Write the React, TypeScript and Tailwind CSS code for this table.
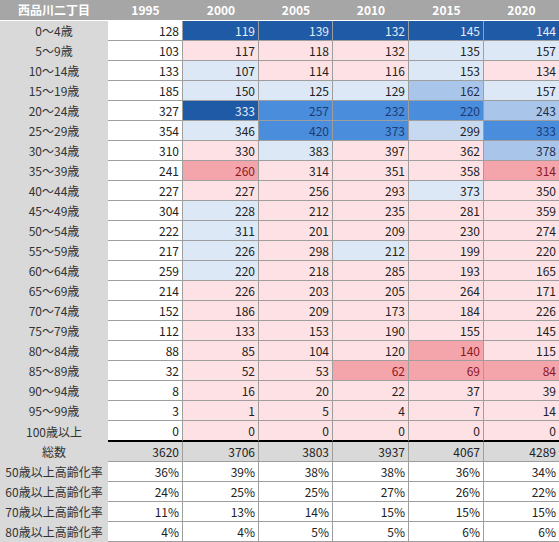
import React from 'react'

type Tone = 'w' | 'D' | 'M' | 'S' | 'T' | 'L' | 'P' | 'R'

const YEARS = ['1995', '2000', '2005', '2010', '2015', '2020']

// each row: label, then values with their fill tone (1995 is always plain)
const AGE_ROWS: [string, string][] = [
  ['0～4歳', '128w 119D 139D 132D 145D 144D'],
  ['5～9歳', '103w 117P 118P 132P 135L 157L'],
  ['10～14歳', '133w 107L 114P 116P 153L 134P'],
  ['15～19歳', '185w 150L 125L 129L 162S 157L'],
  ['20～24歳', '327w 333D 257M 232M 220M 243S'],
  ['25～29歳', '354w 346L 420M 373M 299T 333M'],
  ['30～34歳', '310w 330P 383L 397P 362P 378S'],
  ['35～39歳', '241w 260R 314P 351P 358P 314R'],
  ['40～44歳', '227w 227P 256P 293P 373L 350P'],
  ['45～49歳', '304w 228L 212P 235P 281P 359P'],
  ['50～54歳', '222w 311L 201P 209P 230P 274P'],
  ['55～59歳', '217w 226L 298P 212L 199P 220P'],
  ['60～64歳', '259w 220L 218P 285P 193P 165P'],
  ['65～69歳', '214w 226P 203P 205P 264P 171P'],
  ['70～74歳', '152w 186P 209P 173P 184P 226P'],
  ['75～79歳', '112w 133P 153P 190P 155P 145P'],
  ['80～84歳', '88w 85P 104P 120P 140R 115P'],
  ['85～89歳', '32w 52P 53P 62R 69R 84R'],
  ['90～94歳', '8w 16P 20P 22P 37P 39P'],
  ['95～99歳', '3w 1P 5P 4P 7P 14P'],
  ['100歳以上', '0w 0P 0P 0P 0P 0P'],
]

const TOTALS = ['3620', '3706', '3803', '3937', '4067', '4289']

const RATES: [string, string[]][] = [
  ['50歳以上高齢化率', ['36%', '39%', '38%', '38%', '36%', '34%']],
  ['60歳以上高齢化率', ['24%', '25%', '25%', '27%', '26%', '22%']],
  ['70歳以上高齢化率', ['11%', '13%', '14%', '15%', '15%', '15%']],
  ['80歳以上高齢化率', ['4%', '4%', '5%', '5%', '6%', '6%']],
]

const toneClass: Record<Tone, string> = {
  w: 'bg-white text-[#222]',
  D: 'bg-[#1f5aa6] text-[#e4ecf7]',
  M: 'bg-[#4a8ddc] text-[#1d3a75]',
  S: 'bg-[#a9c6ea] text-[#1f2d4a]',
  T: 'bg-[#c6d9f1] text-[#222]',
  L: 'bg-[#dce8f6] text-[#222]',
  P: 'bg-[#fde1e4] text-[#222]',
  R: 'bg-[#f4a5ab] text-[#8c1622]',
}

function Label({ children }: { children: React.ReactNode }) {
  return (
    <div className="flex h-[20px] items-center justify-center bg-[#d9d9d9] text-[12px] text-[#333]">
      {children}
    </div>
  )
}

function Cell({
  value,
  tone = 'w',
  last,
  className = '',
}: {
  value: string
  tone?: Tone
  last?: boolean
  className?: string
}) {
  return (
    <div
      className={`flex h-[20px] items-center justify-end border-b border-[#9e9e9e] pr-[3px] text-[12px] ${
        last ? '' : 'border-r'
      } ${toneClass[tone]} ${className}`}
    >
      {value}
    </div>
  )
}

export default function App() {
  return (
    <div
      className="w-[559px] bg-white"
      style={{ fontFamily: '"Noto Sans CJK JP", "Noto Sans", sans-serif' }}
    >
      <div className="grid grid-cols-[108px_75px_76px_74px_76px_75px_75px]">
        {/* header */}
        <div className="flex h-[21px] items-center justify-center border-b border-white bg-[#a6a6a6] text-[12px] font-bold text-white">
          西品川二丁目
        </div>
        {YEARS.map((y) => (
          <div
            key={y}
            className="flex h-[21px] items-center justify-center border-b border-white bg-[#a6a6a6] text-[12px] font-bold text-white"
          >
            {y}
          </div>
        ))}

        {/* age rows */}
        {AGE_ROWS.map(([label, data], r) => {
          const isLast = r === AGE_ROWS.length - 1
          return (
            <React.Fragment key={label}>
              <div
                className={`flex items-center justify-center bg-[#d9d9d9] text-[12px] text-[#333] ${
                  isLast ? 'h-[21px]' : 'h-[20px]'
                }`}
              >
                {label}
              </div>
              {data.split(' ').map((tok, i) => (
                <Cell
                  key={i}
                  value={tok.slice(0, -1)}
                  tone={tok.slice(-1) as Tone}
                  last={i === 5}
                  className={isLast ? 'h-[21px] border-b-2 border-b-black' : ''}
                />
              ))}
            </React.Fragment>
          )
        })}

        {/* totals */}
        <Label>総数</Label>
        {TOTALS.map((t, i) => (
          <div
            key={i}
            className={`flex h-[20px] items-center justify-end border-b border-[#9e9e9e] bg-[#d9d9d9] pr-[3px] text-[12px] text-[#222] ${
              i === 5 ? '' : 'border-r'
            }`}
          >
            {t}
          </div>
        ))}

        {/* rates */}
        {RATES.map(([label, vals]) => (
          <React.Fragment key={label}>
            <Label>{label}</Label>
            {vals.map((v, i) => (
              <Cell key={i} value={v} last={i === 5} />
            ))}
          </React.Fragment>
        ))}
      </div>
    </div>
  )
}
